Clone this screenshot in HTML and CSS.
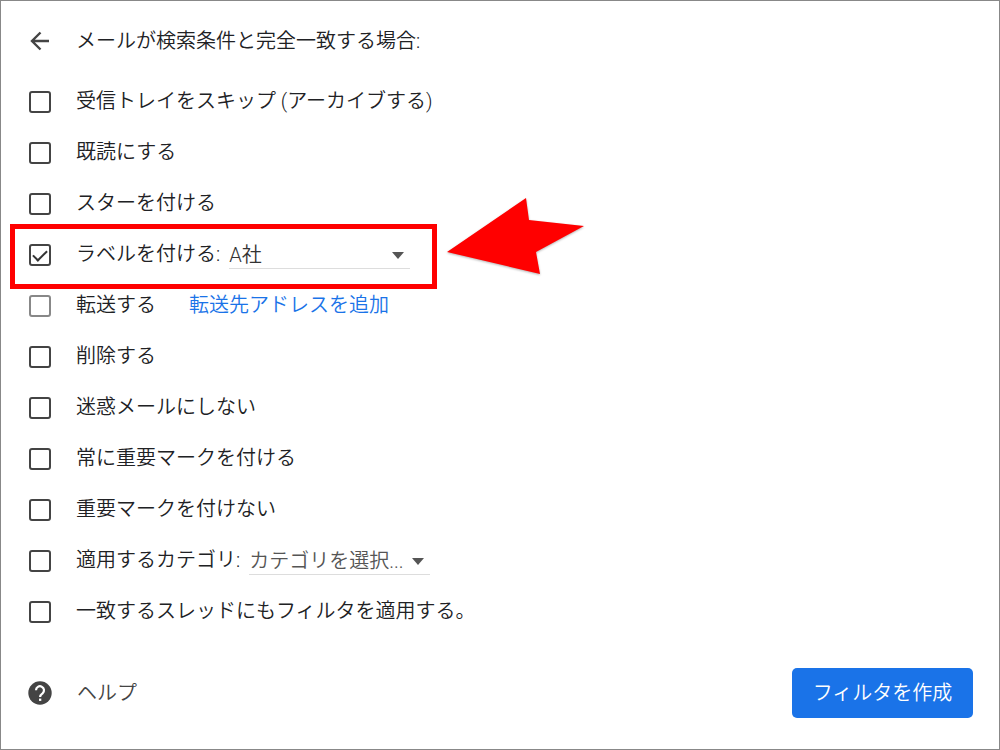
FILE: index.html
```html
<!DOCTYPE html>
<html lang="ja">
<head>
<meta charset="UTF-8">
<meta name="viewport" content="width=device-width, initial-scale=1.0">
<title>フィルタを作成</title>
<link rel="stylesheet" href="styles.css">
</head>
<body>
<form class="filter">
  <header class="filter-head">
    <button type="button" class="back" aria-label="戻る">
      <svg width="20" height="20" viewBox="0 0 20 20" fill="none" stroke="#444" stroke-width="2.400"><path d="M19 10H2M10.500 1.500L2 10l8.500 8.500"/></svg>
    </button>
    <h1>メールが検索条件と完全一致する場合:</h1>
  </header>

  <ul class="options">
    <li><input type="checkbox" id="skip"><label for="skip">受信トレイをスキップ (アーカイブする)</label></li>
    <li><input type="checkbox" id="read"><label for="read">既読にする</label></li>
    <li><input type="checkbox" id="star"><label for="star">スターを付ける</label></li>
    <li class="marked">
      <input type="checkbox" id="label" checked><label for="label">ラベルを付ける:</label>
      <span class="dropdown">
        <select aria-label="ラベル"><option>A社</option></select>
        <svg class="caret" width="12" height="7" viewBox="0 0 12 7"><path d="M0 0h12L6 7z" fill="#555"/></svg>
      </span>
      <svg class="pointer" width="138" height="78" viewBox="0 0 138 78"><path d="M0 54L79 0l3 22 55 6-48 26 4 22z" fill="#f00"/></svg>
    </li>
    <li><input type="checkbox" id="forward" disabled><label for="forward">転送する</label><a href="#" class="add-address">転送先アドレスを追加</a></li>
    <li><input type="checkbox" id="delete"><label for="delete">削除する</label></li>
    <li><input type="checkbox" id="nospam"><label for="nospam">迷惑メールにしない</label></li>
    <li><input type="checkbox" id="important"><label for="important">常に重要マークを付ける</label></li>
    <li><input type="checkbox" id="unimportant"><label for="unimportant">重要マークを付けない</label></li>
    <li>
      <input type="checkbox" id="category"><label for="category">適用するカテゴリ:</label>
      <span class="dropdown placeholder">
        <select aria-label="カテゴリ"><option>カテゴリを選択...</option></select>
        <svg class="caret" width="12" height="7" viewBox="0 0 12 7"><path d="M0 0h12L6 7z" fill="#555"/></svg>
      </span>
    </li>
    <li><input type="checkbox" id="existing"><label for="existing">一致するスレッドにもフィルタを適用する。</label></li>
  </ul>

  <footer class="filter-foot">
    <a href="#" class="help">
      <svg width="24" height="24" viewBox="0 0 24 24"><circle cx="12" cy="12" r="11.700" fill="#444"/><path d="M8 9.200a4 4 0 1 1 6.600 3.100C13 13.500 12.100 14 12.100 16" fill="none" stroke="#fff" stroke-width="2.200"/><path d="M11 17.600h2.300v2.300H11z" fill="#fff"/></svg>
      <span>ヘルプ</span>
    </a>
    <button type="submit" class="create">フィルタを作成</button>
  </footer>
</form>
</body>
</html>
```

FILE: styles.css
```css
*, *::before, *::after {
  box-sizing: border-box;
}

body {
  margin: 0;
  background: #fff;
  color: #202124;
  font-family: Roboto, "Noto Sans CJK JP", sans-serif;
  font-size: 20px;
  font-weight: 350;
  line-height: 28px;
}

.filter {
  min-height: 100vh;
  padding: 14px 26px 30px 28px;
  border: 1px solid #888;
}

.filter-head {
  display: flex;
  align-items: center;
  gap: 25px;
  height: 51px;
  margin-bottom: 10px;
}

.back {
  display: flex;
  justify-content: center;
  width: 22px;
  padding: 0;
  border: 0;
  background: none;
  cursor: pointer;
}

h1 {
  margin: 0;
  font-size: 20px;
  font-weight: inherit;
}

.options {
  margin: 0;
  padding: 0;
  list-style: none;
}

.options li {
  position: relative;
  display: flex;
  align-items: center;
  height: 51px;
}

.options label,
.add-address {
  padding-bottom: 2px;
}

input[type="checkbox"] {
  appearance: none;
  flex: none;
  width: 22px;
  height: 22px;
  margin: 0 25px 0 0;
  border: 2px solid #444;
  border-radius: 3px;
}

input[type="checkbox"]:disabled {
  border-color: #888;
}

input[type="checkbox"]:checked::before {
  content: "";
  display: block;
  width: 14px;
  height: 8px;
  margin: 4px 0 0 2px;
  border: solid #333;
  border-width: 0 0 2px 2px;
  transform: rotate(-45deg);
}

.dropdown {
  position: relative;
  width: 181px;
  margin-left: 9px;
}

.dropdown select {
  appearance: none;
  display: block;
  width: 100%;
  height: 28px;
  padding: 0 0 1px;
  border: 0;
  border-bottom: 1px solid #ddd;
  border-radius: 0;
  background: none;
  color: #333;
  font: inherit;
}

.placeholder select {
  color: #555;
}

.caret {
  position: absolute;
  top: 11px;
  right: 6px;
  pointer-events: none;
}

a {
  color: #1a73e8;
  text-decoration: none;
}

.add-address {
  margin-left: 33px;
}

/* 説明用の赤枠と矢印 */
.marked::after {
  content: "";
  position: absolute;
  top: -5px;
  left: -19px;
  width: 427px;
  height: 65px;
  border: 5px solid #f00;
  pointer-events: none;
}

.pointer {
  position: absolute;
  top: -31px;
  left: 418px;
  filter: drop-shadow(0 1px 1px rgba(0, 0, 0, 0.3));
}

.filter-foot {
  display: flex;
  align-items: center;
  justify-content: space-between;
  margin-top: 31px;
}

.help {
  display: flex;
  align-items: center;
  gap: 25px;
  margin-left: -1px;
  color: #444;
}

.create {
  width: 181px;
  height: 50px;
  padding: 0;
  border: 0;
  border-radius: 5px;
  background: #1a73e8;
  color: #fff;
  font: inherit;
  cursor: pointer;
}
```
